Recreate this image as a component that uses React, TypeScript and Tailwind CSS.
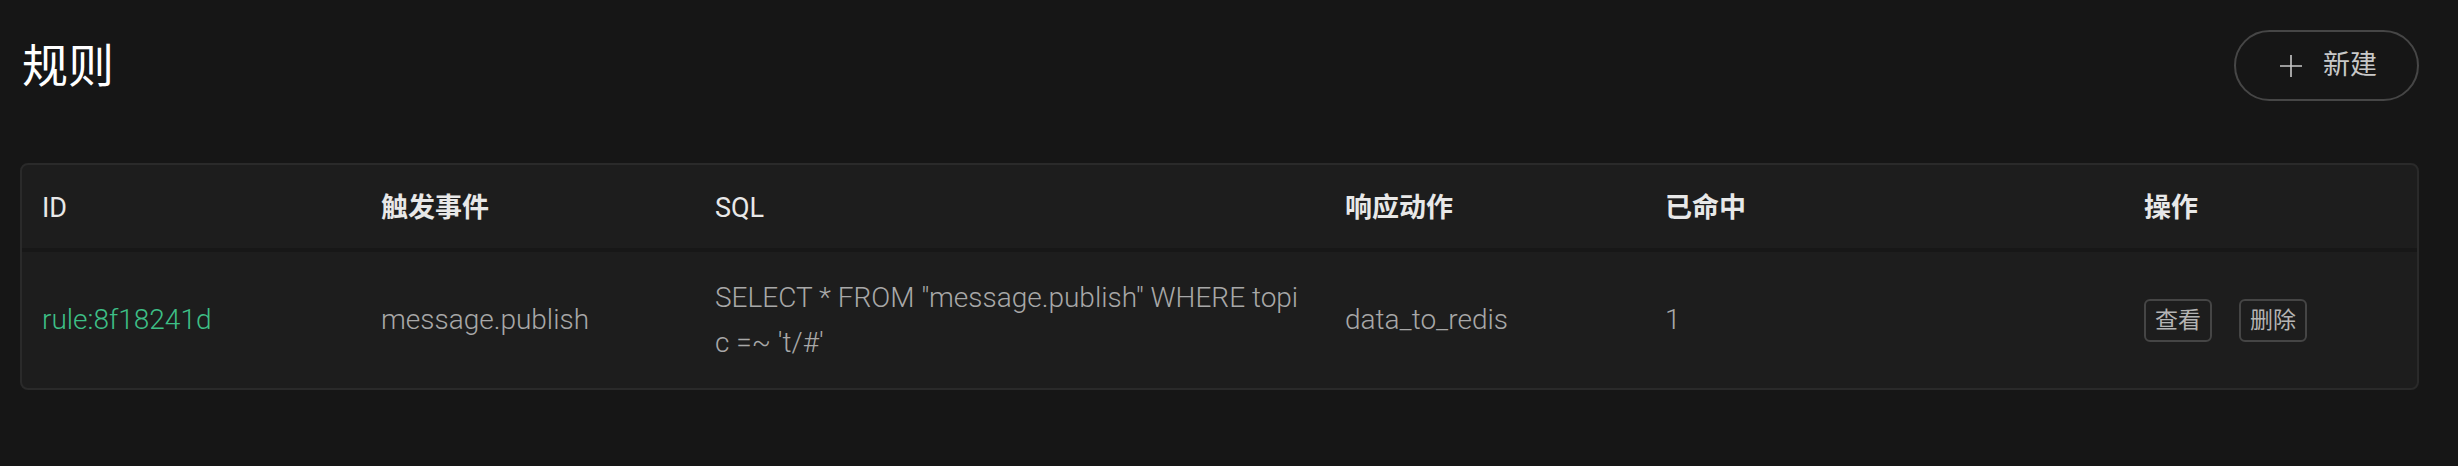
import React from "react";

const font = { fontFamily: "Roboto, 'Noto Sans CJK SC', sans-serif" };

const rules = [
  {
    id: "rule:8f18241d",
    event: "message.publish",
    sql: `SELECT * FROM "message.publish" WHERE topic =~ 't/#'`,
    action: "data_to_redis",
    hits: 1,
  },
];

const cols = "grid grid-cols-[339px_334px_630px_320px_479px_1fr]";

export default function App() {
  return (
    <div className="min-h-screen w-full bg-[#161616] pl-[20px] pr-[39px] pt-[30px]" style={font}>
      {/* Header */}
      <div className="flex items-center justify-between h-[71px]">
        <h1 className="pl-[2px] text-[46px] leading-none font-normal text-white">规则</h1>
        <button className="flex items-center h-[71px] w-[185px] rounded-full border-2 border-[#464646] pl-[43px] text-[#c8c8c8]">
          <svg className="h-[24px] w-[24px]" viewBox="0 0 24 24" fill="none" stroke="currentColor" strokeWidth={1.6}>
            <path d="M12 1v22M1 12h22" />
          </svg>
          <span className="ml-[20px] text-[27px] leading-none">新建</span>
        </button>
      </div>

      {/* Table */}
      <div className="mt-[62px] rounded-[8px] border-2 border-[#2a2a2a] bg-[#1d1d1d] overflow-hidden">
        <div className={`${cols} h-[87px] items-center pt-[4px] border-b-4 border-[#171717] text-[27px] text-[#e8e8e8]`}>
          <div className="pl-[20px] font-normal">ID</div>
          <div className="pl-[20px] font-bold">触发事件</div>
          <div className="pl-[20px] font-normal">SQL</div>
          <div className="pl-[20px] font-bold">响应动作</div>
          <div className="pl-[20px] font-bold">已命中</div>
          <div className="pl-[20px] font-bold">操作</div>
        </div>
        {rules.map((r) => (
          <div key={r.id} className={`${cols} items-center py-[23px] text-[28px] font-light text-[#a8a8a8]`}>
            <div className="pl-[20px] text-[#3dbf86]">{r.id}</div>
            <div className="pl-[20px]">{r.event}</div>
            <div className="pl-[20px] pr-[24px] leading-[45px] break-all">{r.sql}</div>
            <div className="pl-[20px]">{r.action}</div>
            <div className="pl-[20px]">{r.hits}</div>
            <div className="pl-[20px] flex items-center gap-[27px]">
              <button className="h-[43px] rounded-[6px] border-2 border-[#454545] px-[9px] text-[23px] font-normal leading-none text-[#b4b4b4]">
                查看
              </button>
              <button className="h-[43px] rounded-[6px] border-2 border-[#454545] px-[9px] text-[23px] font-normal leading-none text-[#b4b4b4]">
                删除
              </button>
            </div>
          </div>
        ))}
      </div>
    </div>
  );
}
